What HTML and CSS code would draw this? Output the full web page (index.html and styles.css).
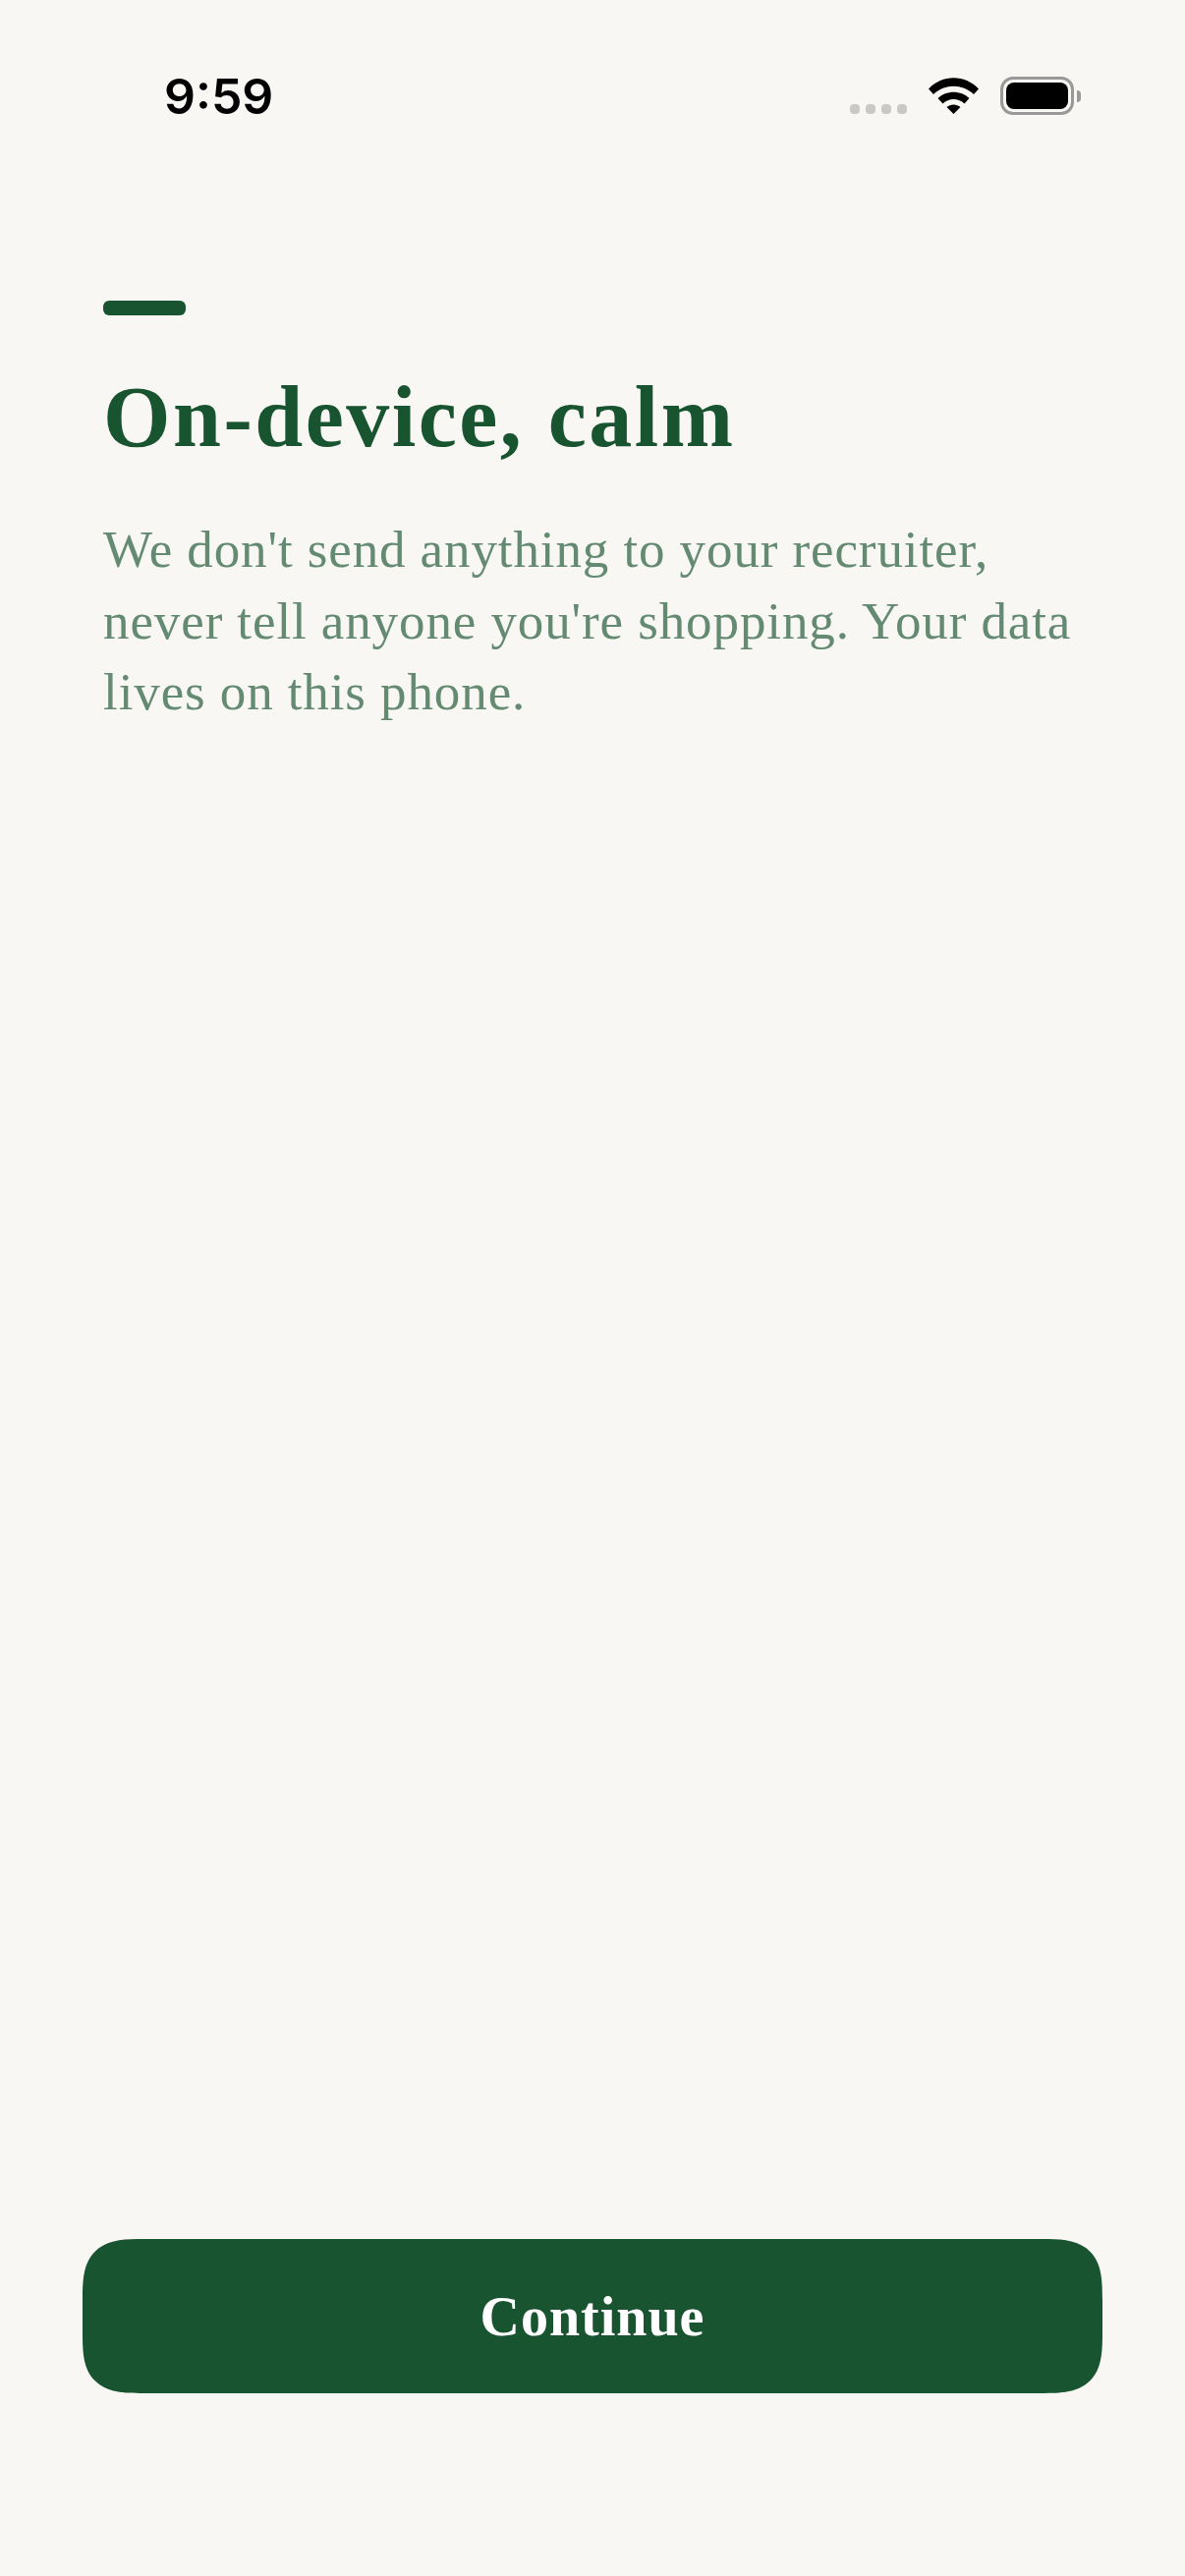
FILE: index.html
```html
<!DOCTYPE html>
<html lang="en">
<head>
  <meta charset="utf-8">
  <title>On-device, calm</title>
  <link rel="stylesheet" href="styles.css">
</head>
<body>
  <div class="screen">
    <div class="status-bar">
      <span class="time">9:59</span>
      <div class="status-icons">
        <div class="signal">
          <span class="dot"></span>
          <span class="dot"></span>
          <span class="dot"></span>
          <span class="dot"></span>
        </div>
        <svg class="wifi" width="51" height="37" viewBox="0 0 51 37">
          <path d="M0 11.5 C14 -3.5 37 -3.5 51 11.5 L46 17 C34.500 6 16.500 6 5 17 Z" fill="#000"/>
          <path d="M9.500 21 C18 12.500 33 12.500 41.500 21 L36.500 26.500 C30.500 20.500 20.500 20.500 14.500 26.500 Z" fill="#000"/>
          <path d="M18.500 30 C22.500 26.500 28.500 26.500 32.500 30 L25.500 37 Z" fill="#000"/>
        </svg>
        <div class="battery">
          <div class="battery-body"><div class="battery-fill"></div></div>
          <div class="battery-cap"></div>
        </div>
      </div>
    </div>

    <main class="content">
      <div class="accent"></div>
      <h1 class="title">On-device, calm</h1>
      <p class="lead">We don't send anything to your recruiter, never tell anyone you're shopping. Your data lives on this phone.</p>
    </main>

    <div class="footer">
      <button class="continue">Continue</button>
    </div>
  </div>
</body>
</html>
```

FILE: styles.css
```css
* {
  box-sizing: border-box;
}
html, body {
  margin: 0;
  padding: 0;
}
body {
  background: #f8f7f3;
  font-family: "Liberation Serif", serif;
}
.screen {
  display: flex;
  flex-direction: column;
  height: 2622px;
}
.status-bar {
  display: flex;
  justify-content: space-between;
  align-items: flex-start;
  height: 306px;
  padding: 0 106px 0 167px;
}
.time {
  margin-top: 68px;
  font-family: Inter, sans-serif;
  font-size: 50px;
  line-height: 60px;
  font-weight: 600;
  color: #000;
}
.status-icons {
  display: flex;
  align-items: flex-start;
  margin-top: 78px;
}
.signal {
  display: flex;
  gap: 6px;
  margin-top: 28px;
  margin-right: 22px;
}
.dot {
  width: 10px;
  height: 10px;
  border-radius: 4px;
  background: #c9c9c5;
}
.wifi {
  display: block;
  margin-top: 1px;
  margin-right: 22px;
}
.battery {
  display: flex;
  align-items: center;
}
.battery-body {
  width: 75px;
  height: 39px;
  padding: 3px;
  border: 3px solid #999;
  border-radius: 13px;
}
.battery-fill {
  height: 100%;
  background: #000;
  border-radius: 8px;
}
.battery-cap {
  width: 4px;
  height: 12px;
  margin-left: 3px;
  background: #999;
  border-radius: 0 4px 4px 0;
}
.content {
  flex: 1;
  padding: 0 100px 0 105px;
}
.accent {
  width: 84px;
  height: 15px;
  border-radius: 6px;
  background: #17542f;
}
.title {
  margin: 49px 0 0;
  font-size: 88px;
  line-height: 110px;
  font-weight: 700;
  letter-spacing: 2.5px;
  color: #17542f;
}
.lead {
  margin: 43px 0 0;
  font-size: 53px;
  line-height: 72.5px;
  letter-spacing: 0.9px;
  color: #648a71;
}
.footer {
  padding: 0 84px 186px;
}
.continue {
  display: block;
  width: 100%;
  height: 157px;
  border: 0;
  border-radius: 62px;
  corner-shape: superellipse(1.6);
  background: #17542f;
  color: #fff;
  font-family: "Liberation Serif", serif;
  font-size: 56px;
  font-weight: 700;
  letter-spacing: 1px;
}
```
